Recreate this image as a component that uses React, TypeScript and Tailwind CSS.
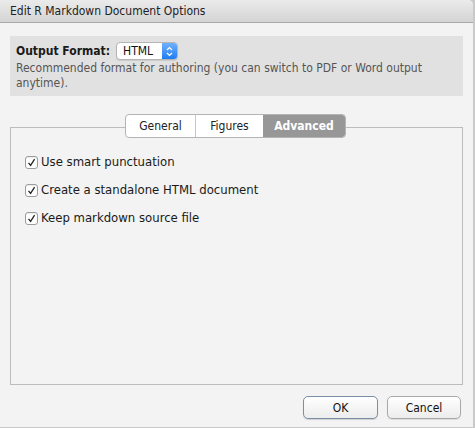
const font = { fontFamily: '"DejaVu Sans Condensed", "DejaVu Sans", "Liberation Sans", sans-serif' }

function Check({ label }: { label: string }) {
  return (
    <label className="flex items-center gap-[3px] h-[16px]">
      <span className="flex h-[13px] w-[13px] items-center justify-center rounded-[3px] border border-[#9c9c9c] bg-white shadow-[inset_0_1px_1px_rgba(0,0,0,0.08)]">
        <svg width="9" height="9" viewBox="0 0 9 9">
          <path d="M1.5 4.8 L3.6 7.4 L7.6 1.2" fill="none" stroke="#222" strokeWidth="1.3" />
        </svg>
      </span>
      <span className="text-[13px] text-[#1a1a1a]">{label}</span>
    </label>
  )
}

export default function App() {
  return (
    <div className="w-[475px] h-[428px] flex bg-[#c9c9c9] overflow-hidden" style={font}>
      <div className="w-[473px] h-[427px] flex flex-col bg-[#f2f3f2] rounded-tr-[5px] overflow-hidden">
        <div className="h-[23px] shrink-0 flex items-center pl-[10px] bg-gradient-to-b from-[#ebebeb] to-[#d4d4d4] border-b border-[#a9a9a9] text-[12px] text-[#222]">
          Edit R Markdown Document Options
        </div>

        <div className="mx-[10px] mt-[13px] h-[60px] bg-[#e1e1e1] px-[6px] pt-[5px]">
          <div className="flex items-center gap-[6px] pt-[1px]">
            <span className="text-[12px] font-bold text-[#1a1a1a]">Output Format:</span>
            <div className="flex h-[18px] w-[62px] items-stretch rounded-[4px] border border-[#b5b5b5] bg-white shadow-[0_1px_1px_rgba(0,0,0,0.1)] overflow-hidden">
              <span className="flex-1 pl-[6px] text-[12px] leading-[16px] text-[#111]">HTML</span>
              <span className="w-[15px] flex items-center justify-center bg-gradient-to-b from-[#6fb1f9] to-[#1a7cf2]">
                <svg width="7" height="11" viewBox="0 0 7 11">
                  <path d="M1 4 L3.5 1.5 L6 4 M1 7 L3.5 9.5 L6 7" fill="none" stroke="#fff" strokeWidth="1.2" />
                </svg>
              </span>
            </div>
          </div>
          <p className="mt-[1px] text-[12px] leading-[15px] text-[#555]">
            Recommended format for authoring (you can switch to PDF or Word output anytime).
          </p>
        </div>

        <div className="relative mx-[10px] mt-[31px] h-[258px] border border-[#bcbcbc]">
          <div className="absolute left-[114px] top-[-14px] flex h-[24px] rounded-[4px] border border-[#b4b4b4] bg-white text-[12px] overflow-hidden">
            <span className="flex w-[70px] items-center justify-center border-r border-[#c8c8c8] text-[#222]">General</span>
            <span className="flex w-[67px] items-center justify-center text-[#222]">Figures</span>
            <span className="flex w-[82px] items-center justify-center bg-[#979797] font-bold text-white">Advanced</span>
          </div>
          <div className="flex flex-col gap-[12px] pl-[14px] pt-[26px]">
            <Check label="Use smart punctuation" />
            <Check label="Create a standalone HTML document" />
            <Check label="Keep markdown source file" />
          </div>
        </div>

        <div className="flex justify-end gap-[9px] pr-[12px] pt-[11px]">
          <button className="h-[23px] w-[75px] rounded-[5px] border border-[#7a8ea6] bg-gradient-to-b from-[#ffffff] to-[#ececec] text-[12px] text-[#111] shadow-[0_1px_1px_rgba(0,0,0,0.15)]">
            OK
          </button>
          <button className="h-[23px] w-[74px] rounded-[5px] border border-[#a9a9a9] bg-gradient-to-b from-[#ffffff] to-[#ececec] text-[12px] text-[#111] shadow-[0_1px_1px_rgba(0,0,0,0.1)]">
            Cancel
          </button>
        </div>
      </div>
    </div>
  )
}
